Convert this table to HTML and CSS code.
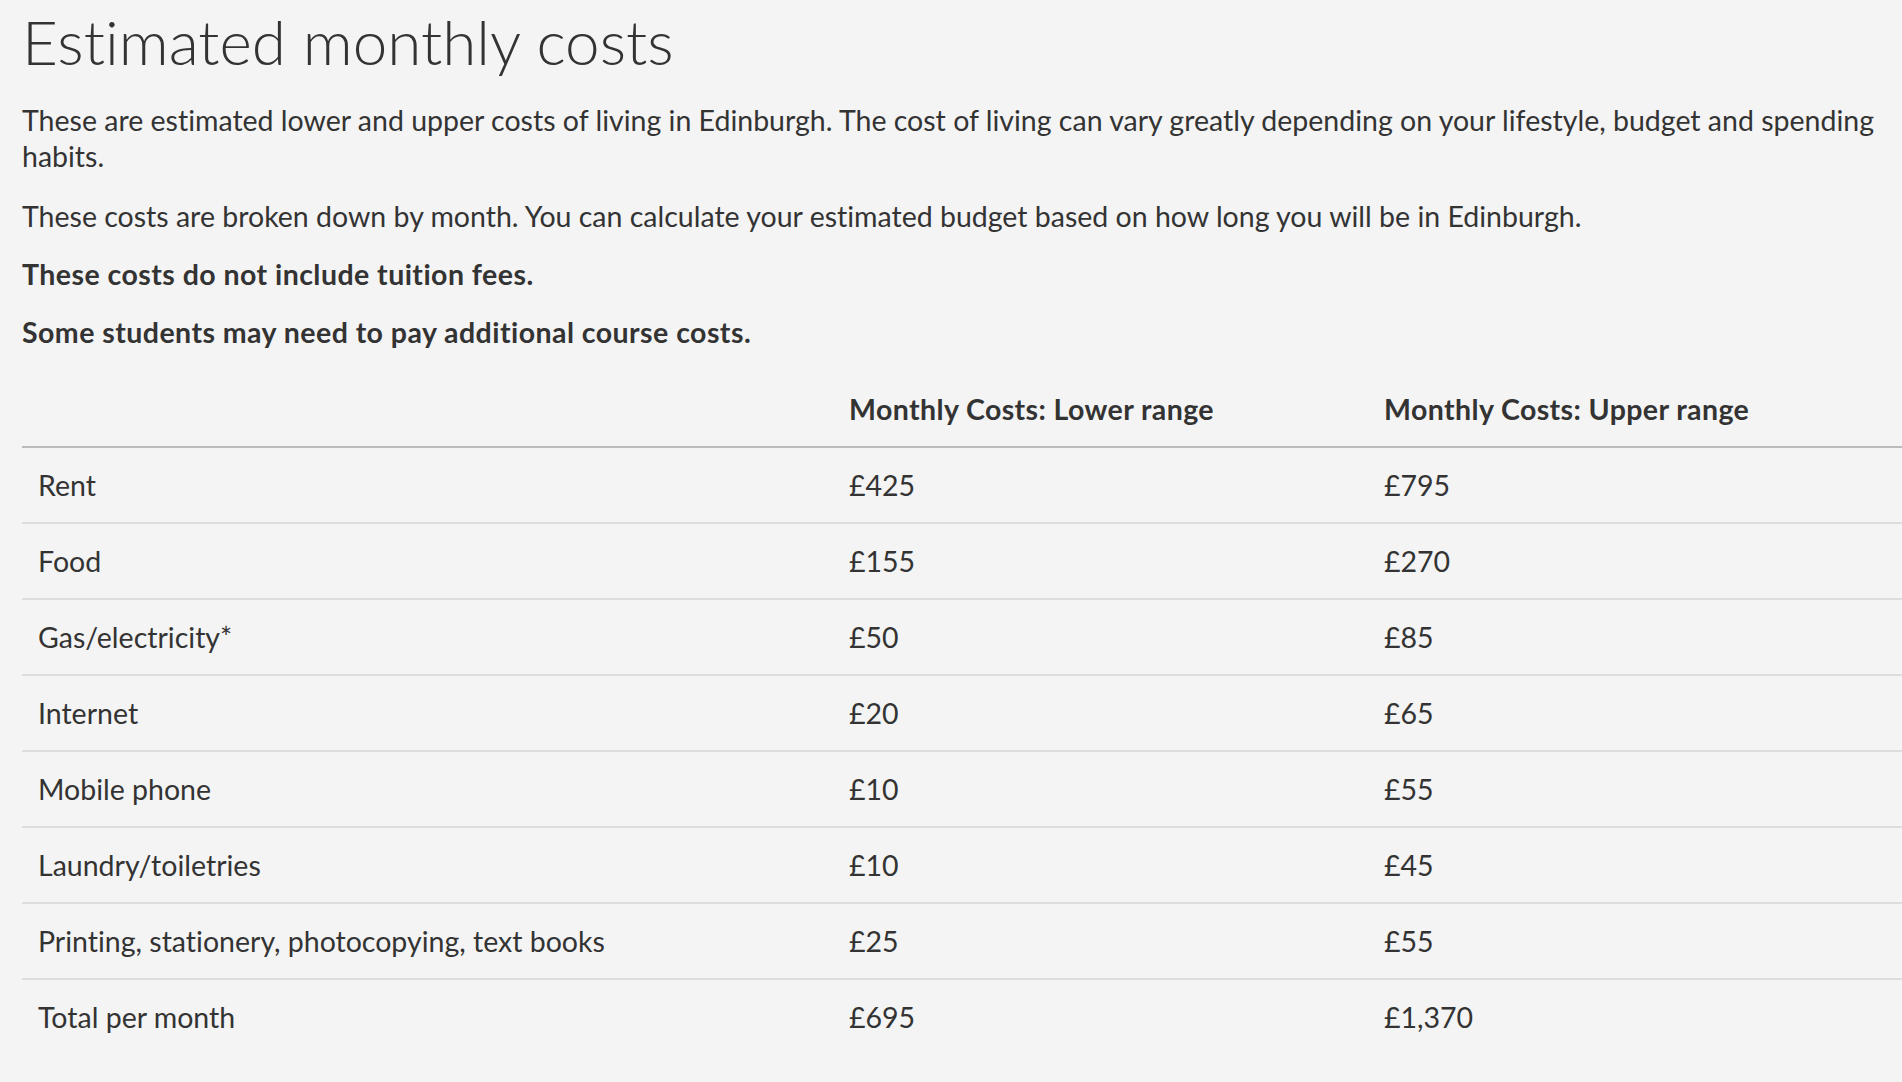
FILE: index.html
```html
<!DOCTYPE html>
<html lang="en">
<head>
<meta charset="utf-8">
<title>Estimated monthly costs</title>
<link rel="stylesheet" href="styles.css">
</head>
<body>
<main class="page">
  <h1 class="title">Estimated monthly costs</h1>
  <p class="para para-first">These are estimated lower and upper costs of living in Edinburgh. The cost of living can vary greatly depending on your lifestyle, budget and spending habits.</p>
  <p class="para">These costs are broken down by month. You can calculate your estimated budget based on how long you will be in Edinburgh.</p>
  <p class="para"><strong>These costs do not include tuition fees.</strong></p>
  <p class="para"><strong>Some students may need to pay additional course costs.</strong></p>
  <table class="costs">
    <colgroup>
      <col class="col-item">
      <col class="col-lower">
      <col class="col-upper">
    </colgroup>
    <thead>
      <tr>
        <th></th>
        <th>Monthly Costs: Lower range</th>
        <th>Monthly Costs: Upper range</th>
      </tr>
    </thead>
    <tbody>
      <tr><td>Rent</td><td>£425</td><td>£795</td></tr>
      <tr><td>Food</td><td>£155</td><td>£270</td></tr>
      <tr><td>Gas/electricity*</td><td>£50</td><td>£85</td></tr>
      <tr><td>Internet</td><td>£20</td><td>£65</td></tr>
      <tr><td>Mobile phone</td><td>£10</td><td>£55</td></tr>
      <tr><td>Laundry/toiletries</td><td>£10</td><td>£45</td></tr>
      <tr><td>Printing, stationery, photocopying, text books</td><td>£25</td><td>£55</td></tr>
      <tr><td>Total per month</td><td>£695</td><td>£1,370</td></tr>
    </tbody>
  </table>
</main>
</body>
</html>
```
FILE: styles.css
```css
html, body {
  margin: 0;
  padding: 0;
  background: #f4f4f4;
  overflow-x: hidden;
}
body {
  color: #333333;
  font-family: "Source Sans Pro", "Lato", "Liberation Sans", sans-serif;
  font-variant-ligatures: no-common-ligatures;
}
.page {
  padding: 0 0 0 22px;
}
.title {
  font-weight: 300;
  font-size: 62px;
  line-height: 72px;
  margin: 5px 0 25px;
}
.para {
  font-size: 28.5px;
  line-height: 36px;
  margin: 0 0 22px;
}
.para-first {
  margin-bottom: 24px;
}
.para strong {
  font-weight: 700;
  letter-spacing: 0.45px;
}
.costs {
  border-collapse: collapse;
  width: 1880px;
  font-size: 28.5px;
  line-height: 36px;
  margin-top: 21px;
}
.col-item { width: 811px; }
.col-lower { width: 535px; }
.col-upper { width: 534px; }
.costs th {
  text-align: left;
  font-weight: 700;
  letter-spacing: 0.4px;
  padding: 19px 16px;
  border-bottom: 2px solid #bbbbbb;
}
.costs td {
  padding: 19px 16px;
  border-bottom: 2px solid #dddddd;
}
.costs tbody tr:last-child td {
  border-bottom: none;
}
```
